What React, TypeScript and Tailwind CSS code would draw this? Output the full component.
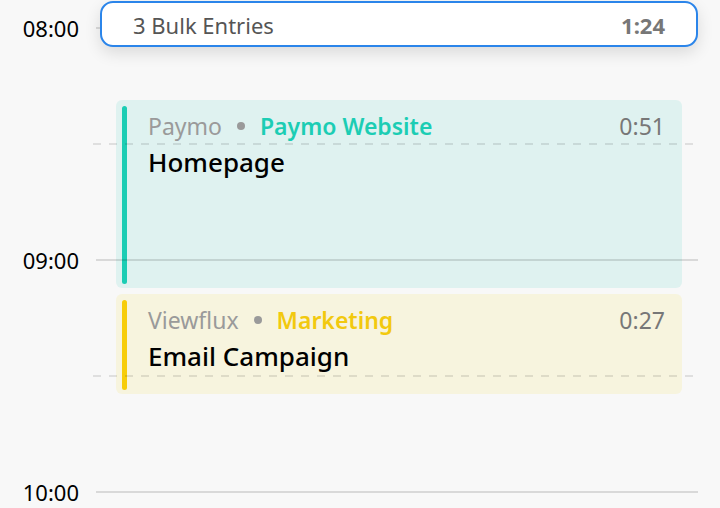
import React from "react";

const HOUR = 232;
const TOP = 28;

type Entry = {
  client: string;
  project: string;
  task: string;
  duration: string;
  top: number;
  height: number;
  card: string;
  bar: string;
  accent: string;
};

const entries: Entry[] = [
  {
    client: "Paymo",
    project: "Paymo Website",
    task: "Homepage",
    duration: "0:51",
    top: 100,
    height: 188,
    card: "bg-[#dff2f0]",
    bar: "bg-[#1ccdb4]",
    accent: "text-[#1ccdb4]",
  },
  {
    client: "Viewflux",
    project: "Marketing",
    task: "Email Campaign",
    duration: "0:27",
    top: 294,
    height: 100,
    card: "bg-[#f7f4de]",
    bar: "bg-[#f7cd0a]",
    accent: "text-[#f2c90f]",
  },
];

const hours = ["08:00", "09:00", "10:00"];

const App = () => {
  return (
    <main
      className="relative w-[720px] h-[508px] overflow-hidden bg-[#f8f8f8]"
      style={{ fontFamily: '"Noto Sans", "Open Sans", sans-serif' }}
    >
      {/* time entries */}
      {entries.map((e) => (
        <div
          key={e.task}
          className={`absolute left-[116px] w-[566px] rounded-md ${e.card} flex gap-[21px] pl-[6px] pr-[17px] pt-[6px] pb-[4px]`}
          style={{ top: e.top, height: e.height }}
        >
          <div className={`w-[5px] rounded-full ${e.bar}`} />
          <div className="flex-1 flex flex-col pt-[4px]">
            <div className="flex items-center text-[23px] leading-8">
              <span className="text-[#9a9a9a]">{e.client}</span>
              <span className="mx-[15px] w-[8px] h-[8px] rounded-full bg-[#9a9a9a]" />
              <span className={`font-semibold ${e.accent}`}>{e.project}</span>
              <span className="ml-auto text-[#777]">{e.duration}</span>
            </div>
            <div className="mt-[2px] text-[26px] leading-9 font-medium text-black">
              {e.task}
            </div>
          </div>
        </div>
      ))}

      {/* hour grid, drawn translucent over the entries */}
      {hours.map((h, i) => (
        <div
          key={h}
          className="absolute left-0 right-0 flex items-center"
          style={{ top: TOP + i * HOUR - 15 }}
        >
          <span className="w-[80px] pr-[1px] text-right text-[22px] leading-[30px] text-black">
            {h}
          </span>
          <div className="ml-[16px] w-[602px] h-[2px] bg-black/[0.12]" />
        </div>
      ))}
      {[0, 1].map((i) => (
        <div
          key={i}
          className="absolute left-[93px] w-[605px] h-[2px] bg-[repeating-linear-gradient(90deg,rgba(0,0,0,0.1)_0_8px,transparent_8px_16px)]"
          style={{ top: TOP + i * HOUR + HOUR / 2 - 1 }}
        />
      ))}

      {/* bulk entries header */}
      <div className="absolute left-[100px] top-[1px] w-[598px] h-[46px] rounded-[13px] border-2 border-[#2b85ea] bg-white shadow-[0_6px_16px_rgba(0,0,0,0.12)] flex items-center pl-[31px] pr-[31px] pt-[2px]">
        <span className="text-[22px] text-[#555]">3 Bulk Entries</span>
        <span className="ml-auto text-[22px] font-bold text-[#777]">1:24</span>
      </div>
    </main>
  );
};

export default App;
